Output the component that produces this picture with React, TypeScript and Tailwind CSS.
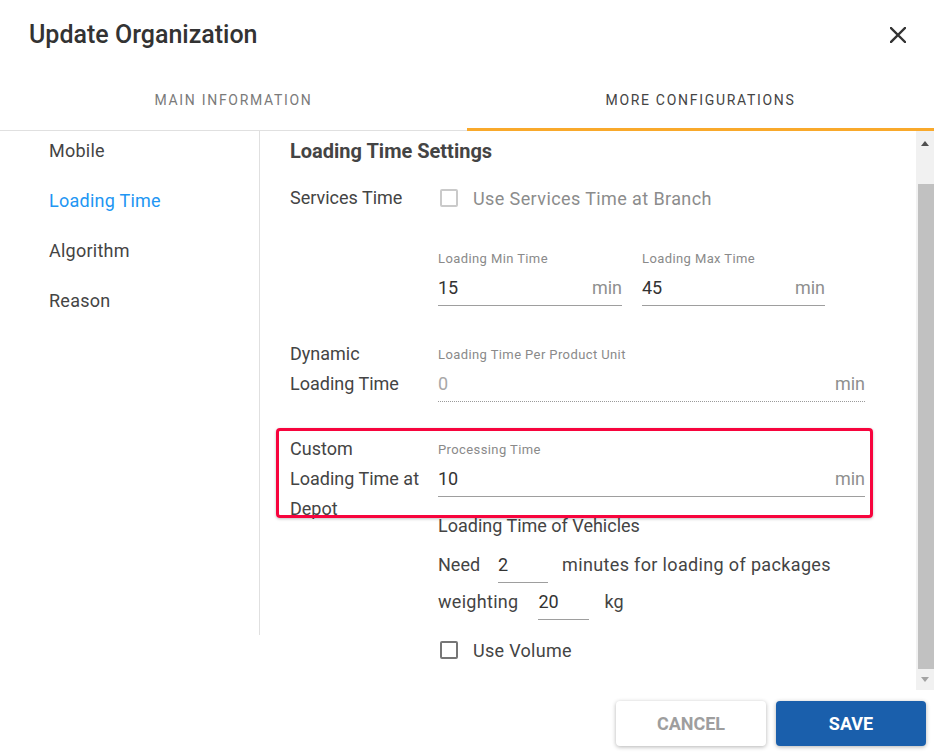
import React from "react";

const Checkbox: React.FC<{ disabled?: boolean }> = ({ disabled }) => (
  <span
    className={
      "inline-block w-[18px] h-[18px] rounded-[2px] border-2 bg-white " +
      (disabled ? "border-[#cacaca]" : "border-[#767676]")
    }
  />
);

const Field: React.FC<{
  label: string;
  value: string;
  dim?: boolean;
  dotted?: boolean;
  className?: string;
}> = ({ label, value, dim, dotted, className }) => (
  <div className={className}>
    <div className="text-[13px] leading-[16px] tracking-[0.4px] text-[#8a8a8a]">{label}</div>
    <div
      className={
        "mt-[6px] flex justify-between text-[18px] leading-[30px] pb-[2px] border-b " +
        (dotted ? "border-dotted border-[#9a9a9a]" : "border-[#9e9e9e]")
      }
    >
      <span className={dim ? "text-[#a8a8a8]" : "text-[#333]"}>{value}</span>
      <span className="text-[#8f8f8f]">min</span>
    </div>
  </div>
);

const App: React.FC = () => {
  return (
    <div className="w-[934px] h-[753px] bg-white overflow-hidden font-['Roboto',sans-serif] text-[#444]">
      {/* header */}
      <div className="h-[68px] flex items-center justify-between pl-[29px] pr-[28px]">
        <h1 className="text-[25px] font-medium text-[#333] leading-[30px] mt-[1px]">Update Organization</h1>
        <svg width="16" height="16" viewBox="0 0 16 16" className="mt-[1px]">
          <path d="M1 1 15 15 M15 1 1 15" stroke="#333" strokeWidth="2.4" strokeLinecap="square" />
        </svg>
      </div>

      {/* tabs */}
      <div className="h-[63px] flex">
        <div className="flex-1 flex items-center justify-center pt-[3px] border-b border-[#e0e0e0] text-[14px] tracking-[1.7px] text-[#7a7a7a]">
          MAIN INFORMATION
        </div>
        <div className="flex-1 flex items-center justify-center pt-[4px] border-b-[3px] border-[#f9a92b] text-[14px] tracking-[1.7px] text-[#444]">
          MORE CONFIGURATIONS
        </div>
      </div>

      {/* body */}
      <div className="h-[559px] flex">
        {/* side menu */}
        <div className="w-[260px] h-[504px] border-r border-[#e0e0e0] pl-[49px] pt-[7px] flex flex-col gap-[24px] text-[18px] leading-[26px] tracking-[0.25px]">
          <div>Mobile</div>
          <div className="text-[#2196f3]">Loading Time</div>
          <div>Algorithm</div>
          <div>Reason</div>
        </div>

        {/* content */}
        <div className="flex-1 pl-[30px] pr-[51px] text-[18px]">
          <div className="pt-[8px] text-[20px] leading-[24px] font-bold text-[#444]">Loading Time Settings</div>

          <div className="mt-[20px] flex items-center h-[30px]">
            <div className="w-[148px] leading-[30px]">Services Time</div>
            <span className="ml-[2px] flex items-center">
              <Checkbox disabled />
            </span>
            <span className="ml-[15px] tracking-[0.4px] text-[#8c8c8c]">Use Services Time at Branch</span>
          </div>

          <div className="mt-[38px] pl-[148px] flex gap-[20px]">
            <Field className="w-[184px]" label="Loading Min Time" value="15" />
            <Field className="w-[183px]" label="Loading Max Time" value="45" />
          </div>

          <div className="mt-[33px] flex">
            <div className="w-[148px] leading-[30px]">
              Dynamic
              <br />
              Loading Time
            </div>
            <Field className="flex-1 pt-[8px]" label="Loading Time Per Product Unit" value="0" dim dotted />
          </div>

          <div className="mt-[32px] flex relative">
            <div className="w-[148px] h-[60px] leading-[30px]">
              Custom
              <br />
              Loading Time at
              <br />
              Depot
            </div>
            <div className="flex-1">
              <Field className="pt-[8px]" label="Processing Time" value="10" />
              <div className="mt-[17px] leading-[24px]">Loading Time of Vehicles</div>
              <div className="mt-[12px] flex items-start leading-[30px]">
                <span>Need</span>
                <span className="ml-[18px] w-[50px] pb-[2px] border-b border-[#9e9e9e] text-[#333]">2</span>
                <span className="ml-[14px] tracking-[0.35px]">minutes for loading of packages</span>
              </div>
              <div className="mt-[4px] flex items-start leading-[30px]">
                <span className="tracking-[0.3px]">weighting</span>
                <span className="ml-[20px] w-[51px] pb-[2px] border-b border-[#9e9e9e] text-[#333]">20</span>
                <span className="ml-[15px]">kg</span>
              </div>
              <div className="mt-[15px] flex items-center h-[30px]">
                <span className="ml-[2px] flex items-center">
                  <Checkbox />
                </span>
                <span className="ml-[15px] tracking-[0.3px]">Use Volume</span>
              </div>
            </div>

            {/* highlight frame */}
            <div className="absolute -top-[6px] -left-[14px] w-[597px] h-[90px] border-[3px] border-[#f7043d] rounded-[4px] shadow-[0_1px_3px_rgba(0,0,0,0.25)] z-10" />
          </div>
        </div>

        {/* scrollbar */}
        <div className="w-[18px] bg-[#f1f1f1] flex flex-col">
          <div className="h-[25px] flex items-center justify-center">
            <div className="w-0 h-0 border-x-[4px] border-x-transparent border-b-[5px] border-b-[#505050]" />
          </div>
          <div className="h-[28px]" />
          <div className="flex-1 ml-[2px] bg-[#c1c1c1]" />
          <div className="h-[21px] flex items-center justify-center">
            <div className="w-0 h-0 border-x-[4px] border-x-transparent border-t-[5px] border-t-[#a3a3a3]" />
          </div>
        </div>
      </div>

      {/* footer */}
      <div className="h-[63px] flex justify-end items-start pt-[11px] pr-[8px] gap-[10px]">
        <button className="w-[150px] h-[45px] rounded-[4px] bg-white text-[18px] font-bold text-[#9e9e9e] shadow-[0_1px_4px_rgba(0,0,0,0.3)]">
          CANCEL
        </button>
        <button className="w-[150px] h-[45px] rounded-[4px] bg-[#1a5fac] text-[18px] font-bold text-white shadow-[0_1px_4px_rgba(0,0,0,0.3)]">
          SAVE
        </button>
      </div>
    </div>
  );
};

export default App;
